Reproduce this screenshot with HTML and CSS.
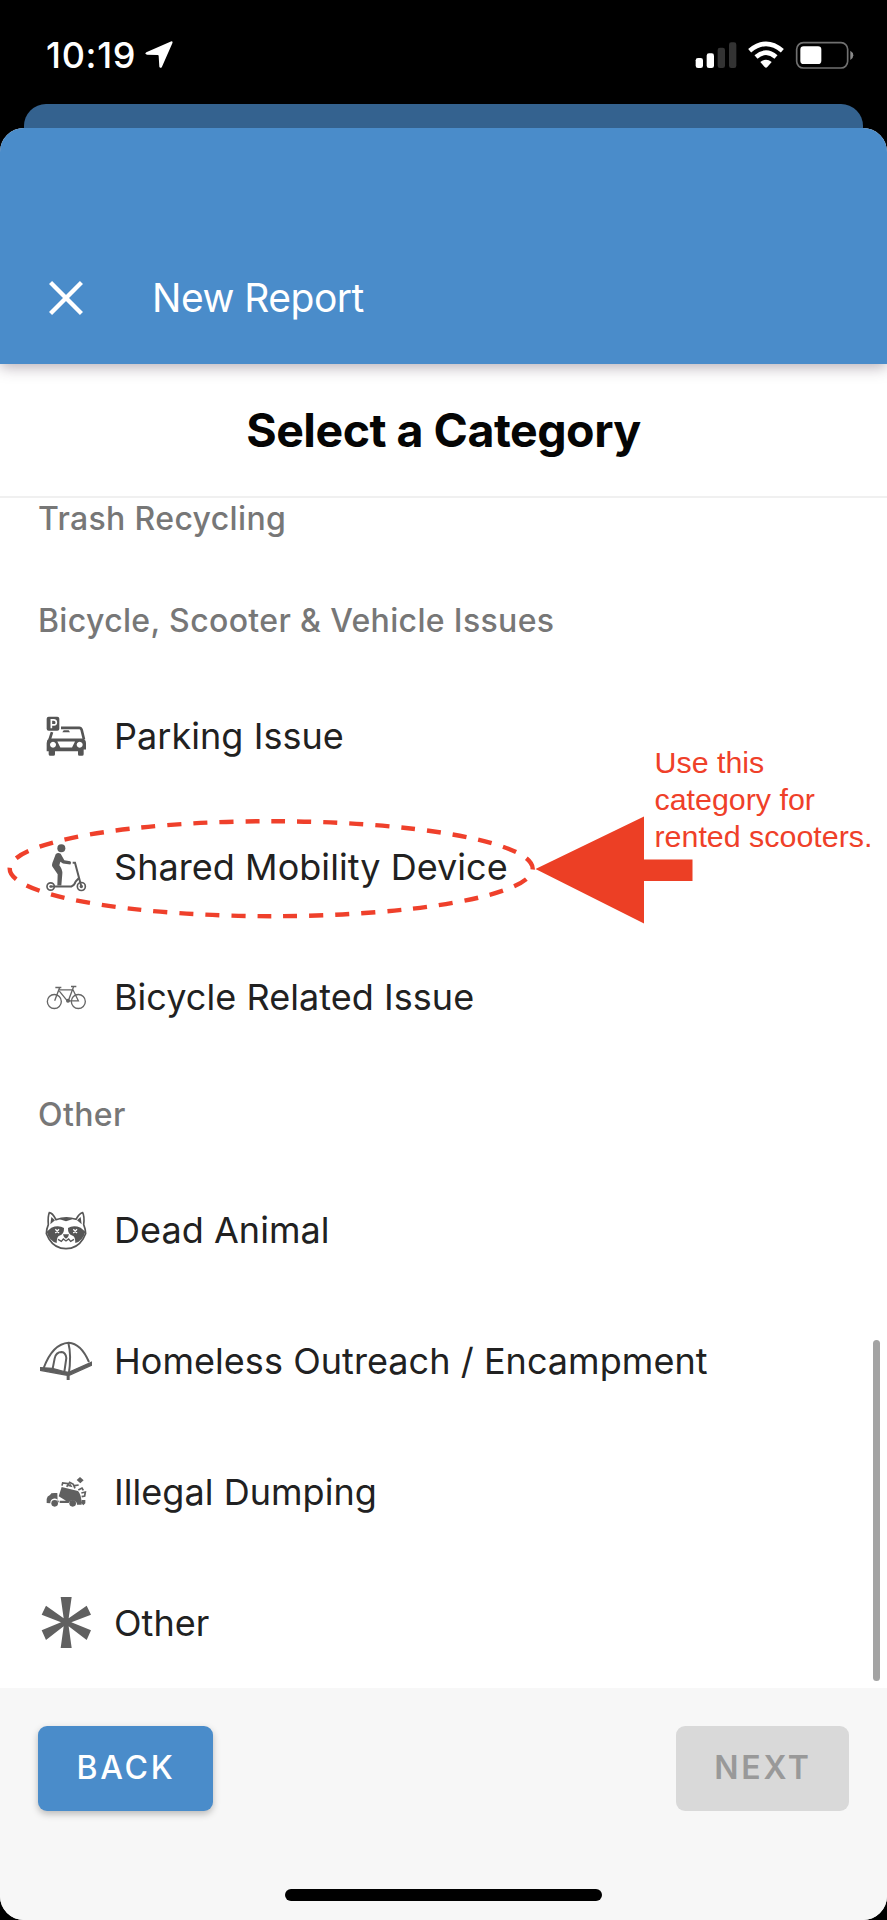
FILE: index.html
```html
<!DOCTYPE html>
<html lang="en">
<head>
<meta charset="utf-8">
<title>New Report</title>
<link rel="stylesheet" href="styles.css">
</head>
<body>
<div class="phone">
  <div class="status">
    <span class="time">10:19</span>
    <svg class="location" viewBox="0 0 84 84"><path d="M80 1Q84 1 82 7L51 77Q47 84 43 77L41 45Q41 42 38 42L6 41Q-3 39 4 34L76 2Z" fill="#fff"/></svg>
    <svg class="signals" viewBox="0 0 480 90">
      <rect x="2" y="51" width="22" height="30" rx="7" fill="#fff"/>
      <rect x="35" y="37" width="22" height="44" rx="7" fill="#fff"/>
      <rect x="68" y="20" width="22" height="61" rx="7" fill="#333"/>
      <rect x="102" y="4" width="22" height="77" rx="7" fill="#333"/>
      <g fill="none" stroke="#fff" stroke-width="14">
        <path d="M164 29Q213-12 262 29"/><path d="M183 48Q213 22 243 48"/>
      </g>
      <path d="M196 63Q213 50 230 63L217 78Q213 82 209 78Z" fill="#fff"/>
      <rect x="305" y="5" width="153" height="76" rx="20" fill="none" stroke="#707070" stroke-width="5"/>
      <rect x="316" y="16" width="63" height="53" rx="10" fill="#fff"/>
      <path d="M466 29Q475 34 475 43Q475 52 466 57Z" fill="#8a8a8a"/>
    </svg>
  </div>
  <div class="behind"></div>
  <main class="sheet">
    <header class="appbar">
      <svg class="close" viewBox="0 0 33 33"><path d="M1.5 1.5L31.5 31.5M31.5 1.5L1.5 31.5" stroke="#fff" stroke-width="4.2"/></svg>
      <span class="appbar-title">New Report</span>
    </header>
    <h1 class="title"><span>Select a Category</span></h1>
    <section class="list">
      <h2 class="group first"><span>Trash Recycling</span></h2>
      <h2 class="group"><span>Bicycle, Scooter &amp; Vehicle Issues</span></h2>
      <div class="row">
        <svg class="icon" viewBox="0 4.5 210 210" fill="#555">
          <rect x="50" y="49" width="38" height="42" rx="6"/>
          <path d="M64 83V58H71Q79 58 79 66T71 73H64" fill="none" stroke="#fff" stroke-width="5"/>
          <path d="M93 82H148Q153 82 155 88L162 117M66 95L59 117" fill="none" stroke="#555" stroke-width="8"/>
          <path d="M101 89H116L120 95H97Z"/>
          <path fill-rule="evenodd" d="M57 114H158Q168 117 168 128V147H161V161Q161 166 156 166H148Q144 166 144 161V152H75V161Q75 166 70 166H61Q56 166 56 161V152H50V128Q50 118 57 114ZM69 124A9 9 0 1 0 69.1 124ZM149 124A9 9 0 1 0 149.1 124ZM82 123L91 141H126L135 123Z"/>
        </svg>
        <span class="label">Parking Issue</span>
      </div>
      <div class="row">
        <svg class="icon" viewBox="0 7.5 210 210" fill="#5c5c5c">
          <circle cx="94" cy="53" r="12"/>
          <path d="M77 71Q84 64 92 70L103 89L121 92Q126 96 121 102L99 99L91 94L88 104Q98 116 97 130L94 165H82L83 131L67 108Q64 103 70 90Z"/>
          <g fill="none" stroke="#5c5c5c"><circle cx="62" cy="168" r="11" stroke-width="5"/><circle cx="154" cy="168" r="12" stroke-width="5"/>
          <path d="M128 97H135L154 168M62 168H124Q133 165 137 153L147 142" stroke-width="6"/></g>
          <circle cx="154" cy="168" r="5"/><circle cx="62" cy="168" r="4"/>
        </svg>
        <span class="label">Shared Mobility Device</span>
        <svg class="marker" viewBox="0 0 700 131">
          <ellipse cx="271.2" cy="66.7" rx="261.5" ry="47.5" fill="none" stroke="#ef402b" stroke-width="4.4" stroke-dasharray="14 11.98" stroke-dashoffset="13.2"/>
          <path d="M535.5 67L644 14.5V57.5H692.5V79H644V121.5Z" fill="#ec3f25"/>
        </svg>
        <p class="note">Use this<br>category for<br>rented scooters.</p>
      </div>
      <div class="row">
        <svg class="icon" viewBox="0 -4.5 210 210" fill="none" stroke="#666" stroke-width="4">
          <circle cx="73" cy="111" r="21"/><circle cx="145" cy="111" r="21"/>
          <path d="M74 109L89 69M76 69H94M86 76H129L145 109H112L88 80M131 66L115 109M123 66H139" />
          <circle cx="114" cy="109" r="4" fill="#666"/>
        </svg>
        <span class="label">Bicycle Related Issue</span>
      </div>
      <h2 class="group"><span>Other</span></h2>
      <div class="row">
        <svg class="icon" viewBox="0 3 210 210" fill="#565656">
          <path d="M78 74Q67 53 58 53Q53 64 55 89Q49 103 49 116L57 132Q75 161 108 161Q141 161 159 132L167 116Q167 103 161 89Q164 64 158 53Q148 55 138 73Q108 63 78 74Z" fill="#fff" stroke="#565656" stroke-width="5"/>
          <path d="M64 66L75 76L61 88ZM152 66L141 76L155 88ZM89 73Q108 63 127 73L108 79Z"/>
          <path d="M50 110L64 98Q86 89 102 99Q103 118 88 122Q80 125 80 144Q57 137 50 110ZM166 110L152 98Q130 89 114 99Q113 118 128 122Q136 125 136 144Q159 137 166 110Z"/>
          <path d="M99 118H117L114 126L108 131L102 126Z"/>
          <path d="M76 103L87 114M87 103L76 114M130 103L141 114M141 103L130 114" stroke="#fff" stroke-width="4"/>
          <path d="M84 133L94 139L100 132L108 138L116 132L122 139L132 133" fill="none" stroke="#565656" stroke-width="4"/>
        </svg>
        <span class="label">Dead Animal</span>
      </div>
      <div class="row">
        <svg class="icon" viewBox="0 396 210 210" fill="none" stroke="#5e5e5e" stroke-width="6">
          <path d="M41 519Q68 446 116 443Q153 445 177 501M115 443Q125 480 116 540M67 526L74 490Q78 471 95 471Q107 472 109 489L103 531"/>
          <path d="M32 518L67 520L103 530L116 532L184 502V511L117 541V553H112V541L32 526Z" fill="#5e5e5e" stroke-width="4"/>
        </svg>
        <span class="label">Homeless Outreach / Encampment</span>
      </div>
      <div class="row">
        <svg class="icon" viewBox="0 -6 210 210" fill="#606060">
          <path d="M50 129V117Q51 108 60 105L64 100Q68 98 82 99L83 127H87A13 13 0 0 0 61 130ZM95 81L144 93Q155 104 155 134H141A13 13 0 0 0 116 129H89V122H108L86 109Z"/>
          <circle cx="74" cy="130" r="10"/><circle cx="128" cy="130" r="10"/>
          <path d="M150 51L161 61L151 70L140 60ZM155 120H166V130L160 136L153 129Z"/>
          <path d="M96 77L98 69L114 71M110 80L119 67L130 73L135 85M134 77L146 75M145 90L156 84L160 91M154 99L166 96L164 108L155 110" fill="none" stroke="#606060" stroke-width="5"/>
          <path d="M112 78L121 71L128 82Z"/>
        </svg>
        <span class="label">Illegal Dumping</span>
      </div>
      <div class="row">
        <svg class="icon" viewBox="0 387 210 210" fill="#606060">
          <path d="M92 411H125L116 475L170 437L183 464L124 487L183 511L170 540L116 499L125 564H92L101 499L48 540L35 511L93 487L35 464L48 437L101 475Z"/>
        </svg>
        <span class="label">Other</span>
      </div>
      <div class="scrollbar"></div>
    </section>
    <footer class="footer">
      <div class="actions">
        <button class="btn back">BACK</button>
        <button class="btn next" disabled>NEXT</button>
      </div>
      <div class="home"></div>
    </footer>
  </main>
</div>
</body>
</html>
```
FILE: styles.css
```css
* { box-sizing: border-box; }
body { margin: 0; background: #000; font-family: Inter, "Liberation Sans", sans-serif; }
.phone { width: 887px; height: 1920px; display: flex; flex-direction: column; overflow: hidden; background: #000; }
.status { height: 104px; flex: none; display: flex; align-items: flex-start; padding: 41px 32px 0 46px; color: #fff; }
.time { width: 99px; font-size: 36px; line-height: 28px; font-weight: 500; letter-spacing: .7px; white-space: nowrap; }
.location { width: 28px; height: 28px; }
.signals { width: 160px; height: 30px; margin-left: auto; }
.behind { height: 48px; margin: 0 24px -24px; flex: none; border-radius: 22px 22px 0 0; background: #34628f; }
.sheet { flex: 1; display: flex; flex-direction: column; overflow: hidden; background: #fff; border-radius: 24px; z-index: 1; }
.appbar { height: 236px; flex: none; display: flex; align-items: center; padding: 104px 0 0 49px; background: #4a8cca; color: #fff; box-shadow: 0 3px 14px rgba(60,40,60,.38); z-index: 2; }
.close { width: 34px; height: 34px; }
.appbar-title { margin-left: 69px; font-size: 39px; line-height: 48px; letter-spacing: -.5px; }
.title { height: 134px; flex: none; margin: 0; display: flex; align-items: center; justify-content: center; border-bottom: 2px solid #f0f0f0; font-size: 46.5px; line-height: 56px; font-weight: 700; color: #050505; letter-spacing: -.5px; }
.list { height: 1190px; flex: none; position: relative; overflow: hidden; background: #fff; }
.group { height: 102px; margin: 0; padding-left: 38px; display: flex; align-items: center; font-size: 32px; line-height: 40px; font-weight: 500; color: #777; letter-spacing: .35px; }
.first { margin-top: -30.5px; }
.row { position: relative; height: 130.8px; padding-left: 31px; display: flex; align-items: center; font-size: 36px; line-height: 44px; color: #212121; white-space: nowrap; }
.icon { width: 70px; height: 70px; flex: none; margin: 0 14px 0 -1px; overflow: visible; }
.label { padding-bottom: 2px; letter-spacing: .05px; }
.marker { position: absolute; left: 0; top: 0; width: 700px; height: 131px; }
.note { position: absolute; left: 654.5px; top: -58px; margin: 0; font: 30.4px/37px "Liberation Sans", Arial, sans-serif; color: #ef4029; }
.scrollbar { position: absolute; left: 873px; top: 842px; width: 7px; height: 341px; border-radius: 4px; background: #a3a3a3; }
.footer { flex: 1; display: flex; flex-direction: column; align-items: center; padding-top: 38px; background: #f7f7f7; }
.actions { align-self: stretch; display: flex; justify-content: space-between; padding: 0 38px; }
.btn { height: 85px; border: 0; border-radius: 9px; padding: 0 0 1px 1px; font: 500 32px/40px Inter, sans-serif; letter-spacing: 2.7px; }
.back { width: 175px; color: #fff; background: #4a8cca; box-shadow: 0 3px 7px rgba(0,0,0,.25); }
.next { width: 173px; color: #999; background: #d9d9d9; font-weight: 600; }
.home { width: 317px; height: 12px; margin-top: 78px; border-radius: 6px; background: #000; }
```
